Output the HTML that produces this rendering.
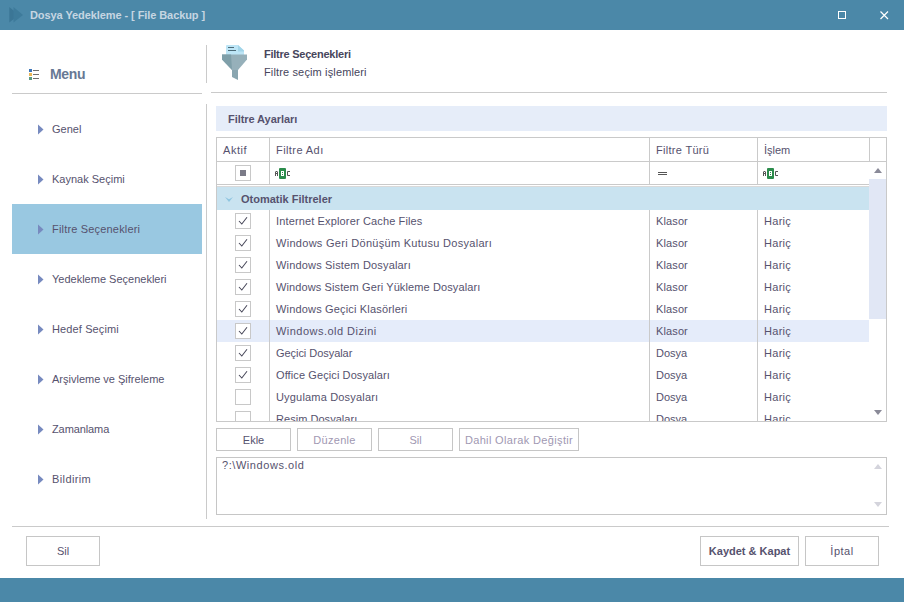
<!DOCTYPE html>
<html><head><meta charset="utf-8">
<style>
html,body{margin:0;padding:0;}
body{width:904px;height:602px;position:relative;overflow:hidden;background:#fff;font-family:"Liberation Sans",sans-serif;}
.a{position:absolute;}
.t{position:absolute;white-space:nowrap;font-size:11px;line-height:11px;color:#56526e;}
.b{font-weight:bold;}
.hl{position:absolute;height:1px;background:#cacaca;}
.vl{position:absolute;width:1px;background:#cacaca;}
.arr{position:absolute;width:0;height:0;border-top:5px solid transparent;border-bottom:5px solid transparent;border-left:6px solid #7a8cbf;}
.btn{position:absolute;box-sizing:border-box;border:1px solid #c6c6c6;background:#fff;}
.cb{position:absolute;box-sizing:border-box;width:16px;height:16px;border:1px solid #c8c8c8;background:#fff;}
</style></head><body>

<div class="a" style="left:0;top:0;width:904px;height:30px;background:#4b88a8;"></div>
<svg class="a" style="left:0;top:0" width="30" height="30" viewBox="0 0 30 30">
  <polygon points="9.3,7 19,15 9.3,22.6" fill="#3b7696"/>
  <polygon points="13.5,7 23,15 13.5,22.6" fill="#3e7b9b"/>
</svg>
<div class="t b" style="left:30px;top:10px;color:#c6d6e2;letter-spacing:-0.08px;">Dosya Yedekleme - [ File Backup ]</div>
<div class="a" style="left:838px;top:11px;width:6px;height:6px;border:1px solid #fff;"></div>
<svg class="a" style="left:879px;top:10px" width="11" height="11" viewBox="0 0 11 11">
  <path d="M1.5 1.5 L9 9 M9 1.5 L1.5 9" stroke="#fff" stroke-width="1.2"/>
</svg>

<svg class="a" style="left:29px;top:69px" width="11" height="12" viewBox="0 0 11 12">
  <rect x="0" y="0" width="3" height="3" fill="#3c74b8"/>
  <rect x="0" y="4" width="3" height="3" fill="#ebb655"/>
  <rect x="0" y="8" width="3" height="3" fill="#5c9a82"/>
  <rect x="4" y="1" width="6" height="1" fill="#707070"/>
  <rect x="4" y="5" width="6" height="1" fill="#707070"/>
  <rect x="4" y="9" width="6" height="1" fill="#707070"/>
</svg>
<div class="t b" style="left:50px;top:67px;font-size:14px;line-height:14px;letter-spacing:-0.3px;color:#687894;">Menu</div>
<div class="hl" style="left:12px;top:93px;width:190px;"></div>
<div class="a" style="left:12px;top:204px;width:190px;height:50px;background:#99c8e1;"></div>

<svg class="a" style="left:37px;top:124px" width="8" height="12" viewBox="0 0 8 12"><polygon points="1,0.5 6.5,5.5 1,10.5" fill="#778abf"/></svg><div class="t" style="left:52px;top:124px;">Genel</div>
<svg class="a" style="left:37px;top:174px" width="8" height="12" viewBox="0 0 8 12"><polygon points="1,0.5 6.5,5.5 1,10.5" fill="#778abf"/></svg><div class="t" style="left:52px;top:174px;">Kaynak Seçimi</div>
<svg class="a" style="left:37px;top:224px" width="8" height="12" viewBox="0 0 8 12"><polygon points="1,0.5 6.5,5.5 1,10.5" fill="#778abf"/></svg><div class="t" style="left:52px;top:224px;letter-spacing:0.18px;">Filtre Seçenekleri</div>
<svg class="a" style="left:37px;top:274px" width="8" height="12" viewBox="0 0 8 12"><polygon points="1,0.5 6.5,5.5 1,10.5" fill="#778abf"/></svg><div class="t" style="left:52px;top:274px;">Yedekleme Seçenekleri</div>
<svg class="a" style="left:37px;top:324px" width="8" height="12" viewBox="0 0 8 12"><polygon points="1,0.5 6.5,5.5 1,10.5" fill="#778abf"/></svg><div class="t" style="left:52px;top:324px;letter-spacing:0.12px;">Hedef Seçimi</div>
<svg class="a" style="left:37px;top:374px" width="8" height="12" viewBox="0 0 8 12"><polygon points="1,0.5 6.5,5.5 1,10.5" fill="#778abf"/></svg><div class="t" style="left:52px;top:374px;">Arşivleme ve Şifreleme</div>
<svg class="a" style="left:37px;top:424px" width="8" height="12" viewBox="0 0 8 12"><polygon points="1,0.5 6.5,5.5 1,10.5" fill="#778abf"/></svg><div class="t" style="left:52px;top:424px;letter-spacing:-0.1px;">Zamanlama</div>
<svg class="a" style="left:37px;top:474px" width="8" height="12" viewBox="0 0 8 12"><polygon points="1,0.5 6.5,5.5 1,10.5" fill="#778abf"/></svg><div class="t" style="left:52px;top:474px;letter-spacing:0.39px;">Bildirim</div>
<div class="vl" style="left:206px;top:45px;height:38px;"></div>
<div class="vl" style="left:206px;top:104px;height:415px;"></div>
<div class="hl" style="left:211px;top:92px;width:676px;"></div>

<svg class="a" style="left:220px;top:44px" width="30" height="38" viewBox="0 0 30 38">
  <path d="M6.5 1 H18 L24 6.5 V11 H6 V1.5 Z" fill="#bde5f6"/>
  <path d="M18 1 L24 6.5 V7.5 H18 Z" fill="#a2d5e9"/>
  <rect x="8" y="3" width="6" height="1" fill="#4c6b78"/>
  <rect x="8" y="6" width="8" height="1" fill="#4c6b78"/>
  <path d="M2 10.5 H27 V15.5 L18 26 H12 L2 15.5 Z" fill="#96b0ba"/>
  <path d="M2 10.5 H11 L12 26 L2 15.5 Z" fill="#7f9fa9"/>
  <path d="M12 26 H18 V36 L12 33 Z" fill="#8aa6b0"/>
</svg>
<div class="t b" style="left:264px;top:49px;color:#47465c;letter-spacing:-0.24px;">Filtre Seçenekleri</div>
<div class="t" style="left:264px;top:67px;color:#46455c;letter-spacing:0.14px;">Filtre seçim işlemleri</div>

<div class="a" style="left:216px;top:106px;width:671px;height:25px;background:#e6edf9;"></div>
<div class="t b" style="left:228px;top:114px;letter-spacing:-0.06px;">Filtre Ayarları</div>

<div class="a" style="left:216px;top:137px;width:669px;height:283px;border:1px solid #c9c9c9;"></div>
<div class="hl" style="left:217px;top:161px;width:669px;"></div>
<div class="hl" style="left:217px;top:184px;width:652px;"></div>
<div class="hl" style="left:217px;top:186px;width:652px;background:#d9d9d9;"></div>
<div class="vl" style="left:269px;top:138px;height:46px;"></div>
<div class="vl" style="left:649px;top:138px;height:46px;"></div>
<div class="vl" style="left:757px;top:138px;height:46px;"></div>
<div class="vl" style="left:869px;top:138px;height:23px;"></div>
<div class="t" style="left:223px;top:145px;letter-spacing:0.55px;">Aktif</div>
<div class="t" style="left:276px;top:145px;letter-spacing:0.42px;">Filtre Adı</div>
<div class="t" style="left:656px;top:145px;letter-spacing:0.3px;">Filtre Türü</div>
<div class="t" style="left:764px;top:145px;">İşlem</div>
<div class="cb" style="left:235px;top:165px;"></div>
<div class="a" style="left:240px;top:170px;width:6px;height:6px;background:#7b7b88;"></div>

<svg class="a" style="left:274px;top:167px" width="18" height="13" viewBox="0 0 18 13">
  <rect x="1" y="5" width="1" height="4" fill="#555"/><rect x="3" y="5" width="1" height="4" fill="#555"/><rect x="1.5" y="4" width="2" height="1" fill="#555"/><rect x="2" y="6" width="1" height="1" fill="#555"/>
  <rect x="5" y="1" width="7" height="11" rx="1" fill="#2c8c4c"/>
  <rect x="7" y="4" width="3" height="5" fill="#fff"/>
  <rect x="8" y="5" width="1" height="1" fill="#2c8c4c"/>
  <rect x="8" y="7" width="1" height="1" fill="#2c8c4c"/>
  <path d="M16 4.5 H13.5 V8.5 H16" stroke="#555" stroke-width="1" fill="none"/>
</svg>
<div class="a" style="left:658px;top:172px;width:9px;height:1px;background:#555;"></div>
<div class="a" style="left:658px;top:174px;width:9px;height:1px;background:#555;"></div>
<svg class="a" style="left:762px;top:167px" width="18" height="13" viewBox="0 0 18 13">
  <rect x="1" y="5" width="1" height="4" fill="#555"/><rect x="3" y="5" width="1" height="4" fill="#555"/><rect x="1.5" y="4" width="2" height="1" fill="#555"/><rect x="2" y="6" width="1" height="1" fill="#555"/>
  <rect x="5" y="1" width="7" height="11" rx="1" fill="#2c8c4c"/>
  <rect x="7" y="4" width="3" height="5" fill="#fff"/>
  <rect x="8" y="5" width="1" height="1" fill="#2c8c4c"/>
  <rect x="8" y="7" width="1" height="1" fill="#2c8c4c"/>
  <path d="M16 4.5 H13.5 V8.5 H16" stroke="#555" stroke-width="1" fill="none"/>
</svg>
<div class="a" style="left:217px;top:187px;width:652px;height:23px;background:#c9e3f0;"></div>
<svg class="a" style="left:224px;top:196px" width="10" height="7" viewBox="0 0 10 7">
  <polygon points="1,1 5,3.3 9,1 5,6" fill="#8fc5e0"/>
</svg>
<div class="t b" style="left:241px;top:194px;">Otomatik Filtreler</div>

<div class="a" style="left:0;top:0;width:904px;height:602px;clip-path:inset(210px 17px 181px 217px);">
<div class="a" style="left:217px;top:320px;width:652px;height:22px;background:#e5ecfa;"></div>
<div class="vl" style="left:269px;top:210px;height:211px;"></div>
<div class="vl" style="left:649px;top:210px;height:211px;"></div>
<div class="vl" style="left:757px;top:210px;height:211px;"></div>
<div class="cb" style="left:235px;top:213px;"></div>
<svg class="a" style="left:235px;top:213px" width="16" height="16" viewBox="0 0 16 16"><path d="M4 8 L6.8 11 L12 4.2" stroke="#48485a" stroke-width="1.05" fill="none"/></svg>
<div class="t" style="left:276px;top:216px;letter-spacing:0.14px;">Internet Explorer Cache Files</div>
<div class="t" style="left:656px;top:216px;letter-spacing:0.12px;">Klasor</div>
<div class="t" style="left:764px;top:216px;letter-spacing:0.3px;">Hariç</div>
<div class="cb" style="left:235px;top:235px;"></div>
<svg class="a" style="left:235px;top:235px" width="16" height="16" viewBox="0 0 16 16"><path d="M4 8 L6.8 11 L12 4.2" stroke="#48485a" stroke-width="1.05" fill="none"/></svg>
<div class="t" style="left:276px;top:238px;letter-spacing:0.29px;">Windows Geri Dönüşüm Kutusu Dosyaları</div>
<div class="t" style="left:656px;top:238px;letter-spacing:0.12px;">Klasor</div>
<div class="t" style="left:764px;top:238px;letter-spacing:0.3px;">Hariç</div>
<div class="cb" style="left:235px;top:257px;"></div>
<svg class="a" style="left:235px;top:257px" width="16" height="16" viewBox="0 0 16 16"><path d="M4 8 L6.8 11 L12 4.2" stroke="#48485a" stroke-width="1.05" fill="none"/></svg>
<div class="t" style="left:276px;top:260px;letter-spacing:0.17px;">Windows Sistem Dosyaları</div>
<div class="t" style="left:656px;top:260px;letter-spacing:0.12px;">Klasor</div>
<div class="t" style="left:764px;top:260px;letter-spacing:0.3px;">Hariç</div>
<div class="cb" style="left:235px;top:279px;"></div>
<svg class="a" style="left:235px;top:279px" width="16" height="16" viewBox="0 0 16 16"><path d="M4 8 L6.8 11 L12 4.2" stroke="#48485a" stroke-width="1.05" fill="none"/></svg>
<div class="t" style="left:276px;top:282px;letter-spacing:0.11px;">Windows Sistem Geri Yükleme Dosyaları</div>
<div class="t" style="left:656px;top:282px;letter-spacing:0.12px;">Klasor</div>
<div class="t" style="left:764px;top:282px;letter-spacing:0.3px;">Hariç</div>
<div class="cb" style="left:235px;top:301px;"></div>
<svg class="a" style="left:235px;top:301px" width="16" height="16" viewBox="0 0 16 16"><path d="M4 8 L6.8 11 L12 4.2" stroke="#48485a" stroke-width="1.05" fill="none"/></svg>
<div class="t" style="left:276px;top:304px;letter-spacing:0.17px;">Windows Geçici Klasörleri</div>
<div class="t" style="left:656px;top:304px;letter-spacing:0.12px;">Klasor</div>
<div class="t" style="left:764px;top:304px;letter-spacing:0.3px;">Hariç</div>
<div class="cb" style="left:235px;top:323px;"></div>
<svg class="a" style="left:235px;top:323px" width="16" height="16" viewBox="0 0 16 16"><path d="M4 8 L6.8 11 L12 4.2" stroke="#48485a" stroke-width="1.05" fill="none"/></svg>
<div class="t" style="left:276px;top:326px;letter-spacing:0.47px;">Windows.old Dizini</div>
<div class="t" style="left:656px;top:326px;letter-spacing:0.12px;">Klasor</div>
<div class="t" style="left:764px;top:326px;letter-spacing:0.3px;">Hariç</div>
<div class="cb" style="left:235px;top:345px;"></div>
<svg class="a" style="left:235px;top:345px" width="16" height="16" viewBox="0 0 16 16"><path d="M4 8 L6.8 11 L12 4.2" stroke="#48485a" stroke-width="1.05" fill="none"/></svg>
<div class="t" style="left:276px;top:348px;letter-spacing:-0.05px;">Geçici Dosyalar</div>
<div class="t" style="left:656px;top:348px;">Dosya</div>
<div class="t" style="left:764px;top:348px;letter-spacing:0.3px;">Hariç</div>
<div class="cb" style="left:235px;top:367px;"></div>
<svg class="a" style="left:235px;top:367px" width="16" height="16" viewBox="0 0 16 16"><path d="M4 8 L6.8 11 L12 4.2" stroke="#48485a" stroke-width="1.05" fill="none"/></svg>
<div class="t" style="left:276px;top:370px;letter-spacing:0.1px;">Office Geçici Dosyaları</div>
<div class="t" style="left:656px;top:370px;">Dosya</div>
<div class="t" style="left:764px;top:370px;letter-spacing:0.3px;">Hariç</div>
<div class="cb" style="left:235px;top:389px;"></div>
<div class="t" style="left:276px;top:392px;letter-spacing:0.18px;">Uygulama Dosyaları</div>
<div class="t" style="left:656px;top:392px;">Dosya</div>
<div class="t" style="left:764px;top:392px;letter-spacing:0.3px;">Hariç</div>
<div class="cb" style="left:235px;top:411px;"></div>
<div class="t" style="left:276px;top:414px;letter-spacing:0.04px;">Resim Dosyaları</div>
<div class="t" style="left:656px;top:414px;">Dosya</div>
<div class="t" style="left:764px;top:414px;letter-spacing:0.3px;">Hariç</div>
</div>
<div class="a" style="left:869px;top:179px;width:17px;height:140px;background:#e1e7f5;"></div>
<svg class="a" style="left:873px;top:167px" width="10" height="7" viewBox="0 0 10 7"><polygon points="1,6 5,1 9,6" fill="#8a8a98"/></svg>
<svg class="a" style="left:873px;top:409px" width="10" height="7" viewBox="0 0 10 7"><polygon points="1,1 5,6 9,1" fill="#8a8a98"/></svg>

<div class="btn" style="left:216px;top:428px;width:75px;height:23px;"></div><div class="t" style="left:216px;top:435px;width:75px;text-align:center;color:#56526e;">Ekle</div>
<div class="btn" style="left:297px;top:428px;width:75px;height:23px;"></div><div class="t" style="left:297px;top:435px;width:75px;text-align:center;color:#9f98b2;letter-spacing:0.3px;">Düzenle</div>
<div class="btn" style="left:378px;top:428px;width:75px;height:23px;"></div><div class="t" style="left:378px;top:435px;width:75px;text-align:center;color:#9f98b2;">Sil</div>
<div class="btn" style="left:459px;top:428px;width:120px;height:23px;"></div><div class="t" style="left:459px;top:435px;width:120px;text-align:center;color:#9f98b2;letter-spacing:0.35px;">Dahil Olarak Değiştir</div>
<div class="a" style="left:216px;top:457px;width:669px;height:56px;border:1px solid #c6c6c6;"></div>
<div class="t" style="left:222px;top:460px;letter-spacing:0.56px;">?:\Windows.old</div>
<svg class="a" style="left:873px;top:463px" width="10" height="7" viewBox="0 0 10 7"><polygon points="1,6 5,1 9,6" fill="#d4d4dc"/></svg>
<svg class="a" style="left:873px;top:501px" width="10" height="7" viewBox="0 0 10 7"><polygon points="1,1 5,6 9,1" fill="#d4d4dc"/></svg>

<div class="hl" style="left:12px;top:526px;width:877px;"></div>
<div class="btn" style="left:26px;top:536px;width:74px;height:30px;"></div><div class="t" style="left:26px;top:546px;width:74px;text-align:center;color:#56526e;">Sil</div>
<div class="btn" style="left:700px;top:536px;width:99px;height:30px;"></div><div class="t b" style="left:700px;top:546px;width:99px;text-align:center;color:#56526e;letter-spacing:0.0px;">Kaydet &amp; Kapat</div>
<div class="btn" style="left:805px;top:536px;width:74px;height:30px;"></div><div class="t" style="left:805px;top:546px;width:74px;text-align:center;color:#56526e;letter-spacing:0.5px;">İptal</div>
<div class="a" style="left:0;top:578px;width:904px;height:24px;background:#4b88a8;"></div>
</body></html>
